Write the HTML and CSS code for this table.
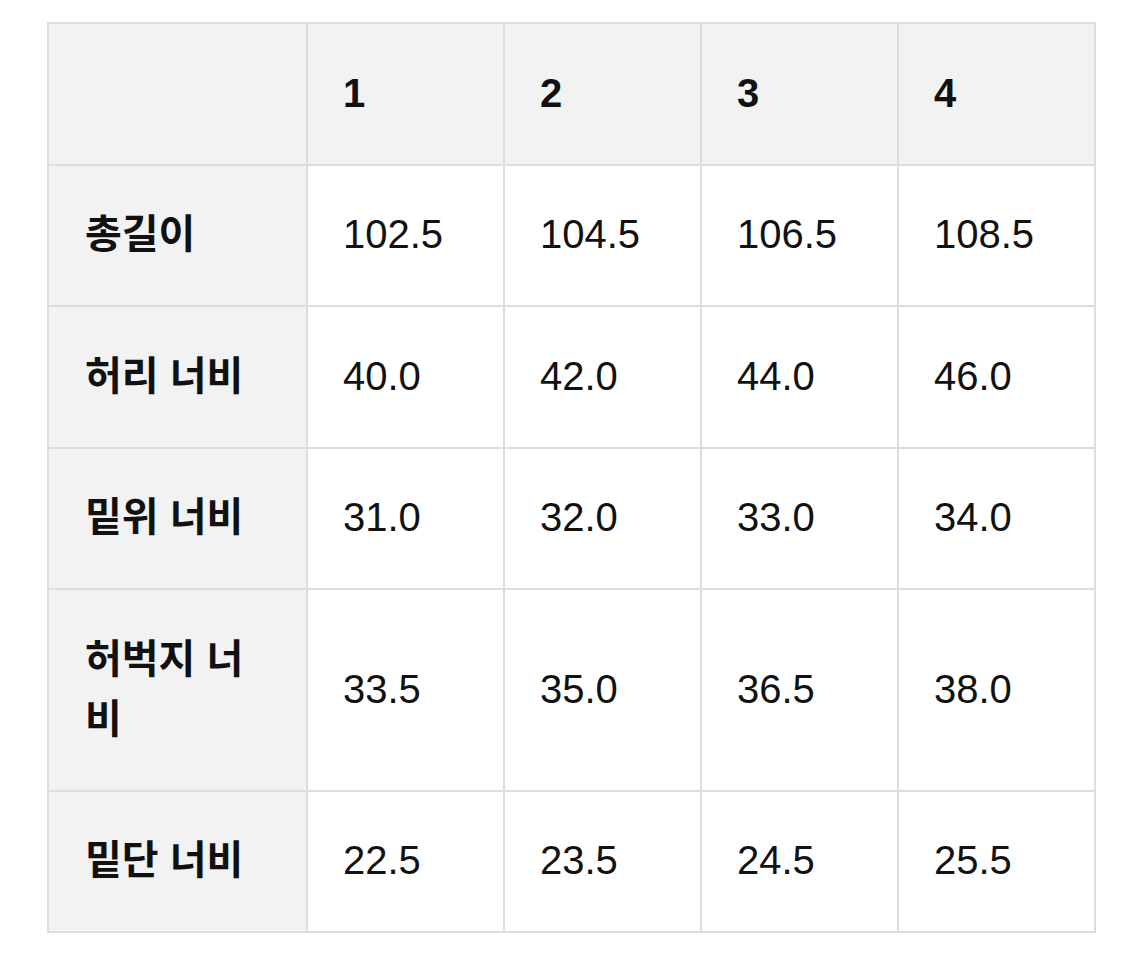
FILE: index.html
```html
<!DOCTYPE html>
<html lang="ko">
<head>
<meta charset="utf-8">
<link rel="stylesheet" href="styles.css">
</head>
<body>
<table class="size-table">
  <colgroup>
    <col class="c-label">
    <col class="c-val">
    <col class="c-val">
    <col class="c-val">
    <col class="c-val">
  </colgroup>
  <thead>
    <tr><th></th><th>1</th><th>2</th><th>3</th><th>4</th></tr>
  </thead>
  <tbody>
    <tr><th>총길이</th><td>102.5</td><td>104.5</td><td>106.5</td><td>108.5</td></tr>
    <tr><th>허리 너비</th><td>40.0</td><td>42.0</td><td>44.0</td><td>46.0</td></tr>
    <tr><th>밑위 너비</th><td>31.0</td><td>32.0</td><td>33.0</td><td>34.0</td></tr>
    <tr><th>허벅지 너비</th><td>33.5</td><td>35.0</td><td>36.5</td><td>38.0</td></tr>
    <tr><th>밑단 너비</th><td>22.5</td><td>23.5</td><td>24.5</td><td>25.5</td></tr>
  </tbody>
</table>
</body>
</html>
```
FILE: styles.css
```css
html, body {
  margin: 0;
  padding: 0;
  background: #ffffff;
}
body {
  padding: 22px 0 0 47px;
  font-family: "Liberation Sans", "Noto Sans CJK KR", sans-serif;
  color: #111111;
}
.size-table {
  border-collapse: collapse;
  table-layout: fixed;
  width: 1047px;
  font-size: 40px;
  line-height: 60px;
}
.c-label { width: 259px; }
.c-val { width: 197px; }
.size-table th,
.size-table td {
  border: 2px solid #dddddd;
  padding: 38.5px 36px 41px 35px;
  text-align: left;
  vertical-align: middle;
}
.size-table thead th {
  background: #f2f2f2;
  font-weight: 700;
}
.size-table tbody th {
  background: #f2f2f2;
  font-weight: 700;
  padding-left: 36px;
}
.size-table td {
  background: #ffffff;
  font-weight: 400;
}
```
